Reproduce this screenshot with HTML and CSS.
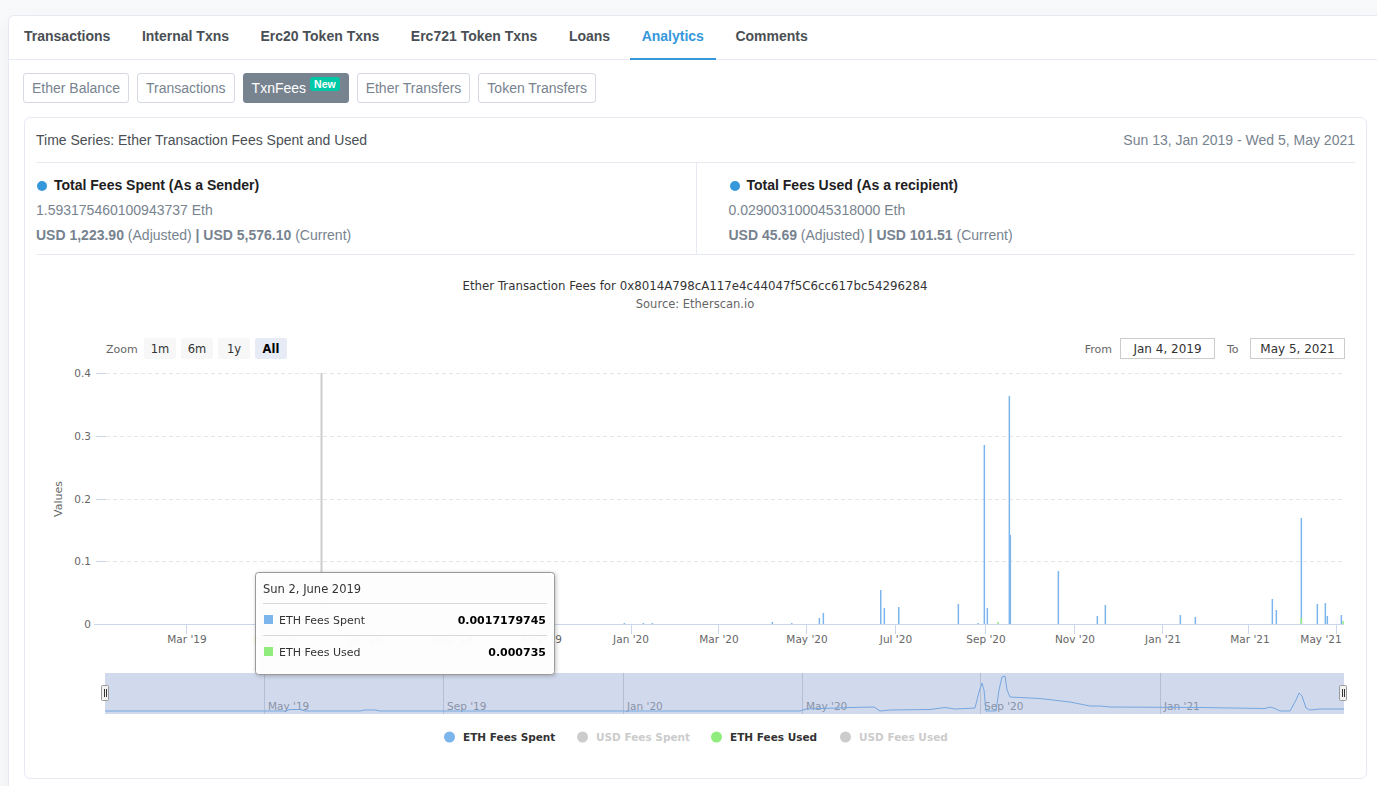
FILE: index.html
```html
<!DOCTYPE html>
<html lang="en">
<head>
  <meta charset="UTF-8">
  <meta name="viewport" content="width=device-width, initial-scale=1.0">
  <title>Analytics - TxnFees</title>
  <link rel="stylesheet" href="styles.css">
</head>
<body>
  <div class="card">
    <!-- Main tabs -->
    <ul class="nav-tabs">
      <li><a href="#">Transactions</a></li>
      <li><a href="#">Internal Txns</a></li>
      <li><a href="#">Erc20 Token Txns</a></li>
      <li><a href="#">Erc721 Token Txns</a></li>
      <li><a href="#">Loans</a></li>
      <li><a href="#" class="active">Analytics</a></li>
      <li><a href="#">Comments</a></li>
    </ul>

    <div class="tab-body">
      <div class="chart-tabs">
        <button class="btn">Ether Balance</button>
        <button class="btn">Transactions</button>
        <button class="btn active">TxnFees<span class="badge-new">New</span></button>
        <button class="btn">Ether Transfers</button>
        <button class="btn">Token Transfers</button>
      </div>

      <div class="panel">
        <div class="panel-header">
          <span>Time Series: Ether Transaction Fees Spent and Used</span>
          <span class="range">Sun 13, Jan 2019 - Wed 5, May 2021</span>
        </div>

        <div class="stats">
          <div class="stat">
            <div class="stat-title"><span class="dot"></span>Total Fees Spent (As a Sender)</div>
            <div class="stat-value">1.593175460100943737 Eth</div>
            <div class="stat-usd"><b>USD 1,223.90</b> (Adjusted) <b>| USD 5,576.10</b> (Current)</div>
          </div>
          <div class="stat">
            <div class="stat-title"><span class="dot"></span>Total Fees Used (As a recipient)</div>
            <div class="stat-value">0.029003100045318000 Eth</div>
            <div class="stat-usd"><b>USD 45.69</b> (Adjusted) <b>| USD 101.51</b> (Current)</div>
          </div>
        </div>

        <!-- Highcharts-like stock chart, drawn in page coordinates -->
        <div class="chart">
          <svg class="hc" viewBox="36 255 1318 510" width="1318" height="510">
            <text class="hc-title" x="695" y="290" text-anchor="middle">Ether Transaction Fees for 0x8014A798cA117e4c44047f5C6cc617bc54296284</text>
            <text class="hc-subtitle" x="695" y="308" text-anchor="middle">Source: Etherscan.io</text>

            <!-- range selector -->
            <text class="rs-label" x="106" y="352.5">Zoom</text>
            <g class="rs-btn">
              <rect x="144" y="338" width="32" height="21" rx="2"/>
              <text x="160" y="352.5" text-anchor="middle">1m</text>
            </g>
            <g class="rs-btn">
              <rect x="181" y="338" width="32" height="21" rx="2"/>
              <text x="197" y="352.5" text-anchor="middle">6m</text>
            </g>
            <g class="rs-btn">
              <rect x="218" y="338" width="32" height="21" rx="2"/>
              <text x="234" y="352.5" text-anchor="middle">1y</text>
            </g>
            <g class="rs-btn active">
              <rect x="255" y="338" width="32" height="21" rx="2"/>
              <text x="271" y="352.5" text-anchor="middle">All</text>
            </g>

            <text class="rs-label" x="1112" y="352.5" text-anchor="end">From</text>
            <rect class="rs-input" x="1120.5" y="338.5" width="94" height="20"/>
            <text class="rs-input-text" x="1167.5" y="353" text-anchor="middle">Jan 4, 2019</text>
            <text class="rs-label" x="1227" y="352.5">To</text>
            <rect class="rs-input" x="1250.5" y="338.5" width="94" height="20"/>
            <text class="rs-input-text" x="1297.5" y="353" text-anchor="middle">May 5, 2021</text>

            <!-- grid -->
            <g class="grid">
              <line x1="106" y1="373.5" x2="1344" y2="373.5"/>
              <line x1="106" y1="436.5" x2="1344" y2="436.5"/>
              <line x1="106" y1="499.5" x2="1344" y2="499.5"/>
              <line x1="106" y1="561.5" x2="1344" y2="561.5"/>
            </g>
            <g class="axis">
              <line x1="96" y1="373.5" x2="106" y2="373.5"/>
              <line x1="96" y1="436.5" x2="106" y2="436.5"/>
              <line x1="96" y1="499.5" x2="106" y2="499.5"/>
              <line x1="96" y1="561.5" x2="106" y2="561.5"/>
              <line x1="94" y1="624.5" x2="1344" y2="624.5"/>
              <line x1="186.5" y1="624" x2="186.5" y2="634"/>
              <line x1="275.5" y1="624" x2="275.5" y2="634"/>
              <line x1="364.5" y1="624" x2="364.5" y2="634"/>
              <line x1="453.5" y1="624" x2="453.5" y2="634"/>
              <line x1="542.5" y1="624" x2="542.5" y2="634"/>
              <line x1="631.5" y1="624" x2="631.5" y2="634"/>
              <line x1="718.5" y1="624" x2="718.5" y2="634"/>
              <line x1="806.5" y1="624" x2="806.5" y2="634"/>
              <line x1="895.5" y1="624" x2="895.5" y2="634"/>
              <line x1="985.5" y1="624" x2="985.5" y2="634"/>
              <line x1="1074.5" y1="624" x2="1074.5" y2="634"/>
              <line x1="1162.5" y1="624" x2="1162.5" y2="634"/>
              <line x1="1248.5" y1="624" x2="1248.5" y2="634"/>
              <line x1="1336.5" y1="624" x2="1336.5" y2="634"/>
            </g>
            <g class="ylabels" text-anchor="end">
              <text x="91" y="377">0.4</text>
              <text x="91" y="440">0.3</text>
              <text x="91" y="503">0.2</text>
              <text x="91" y="565">0.1</text>
              <text x="91" y="628">0</text>
            </g>
            <text class="ytitle" x="62" y="499" text-anchor="middle" transform="rotate(-90 62 499)">Values</text>
            <g class="xlabels" text-anchor="middle">
              <text x="187" y="643">Mar '19</text>
              <text x="275" y="643">May '19</text>
              <text x="365" y="643">Jul '19</text>
              <text x="453" y="643">Sep '19</text>
              <text x="542" y="643">Nov '19</text>
              <text x="631" y="643">Jan '20</text>
              <text x="719" y="643">Mar '20</text>
              <text x="807" y="643">May '20</text>
              <text x="896" y="643">Jul '20</text>
              <text x="986" y="643">Sep '20</text>
              <text x="1075" y="643">Nov '20</text>
              <text x="1163" y="643">Jan '21</text>
              <text x="1250" y="643">Mar '21</text>
              <text x="1321" y="643">May '21</text>
            </g>

            <line class="crosshair" x1="321.5" y1="373" x2="321.5" y2="624"/>

            <!-- ETH Fees Spent -->
            <g class="bars-spent">
              <rect x="623.6" y="623" width="1.5" height="1"/>
              <rect x="642.6" y="623" width="1.5" height="1"/>
              <rect x="651.6" y="623" width="1.5" height="1"/>
              <rect x="771.6" y="622" width="1.5" height="2"/>
              <rect x="791" y="623" width="1.5" height="1"/>
              <rect x="818.6" y="618" width="1.5" height="6"/>
              <rect x="822.6" y="613" width="1.5" height="11"/>
              <rect x="880" y="590" width="1.5" height="34"/>
              <rect x="883.6" y="608" width="1.5" height="16"/>
              <rect x="898" y="607" width="1.5" height="17"/>
              <rect x="957.6" y="604" width="1.5" height="20"/>
              <rect x="977.3" y="623" width="1.5" height="1"/>
              <rect x="983.6" y="445" width="1.5" height="179"/>
              <rect x="986.6" y="608" width="1.5" height="16"/>
              <rect x="1008.6" y="396" width="1.5" height="228"/>
              <rect x="1009.6" y="535" width="1.5" height="89"/>
              <rect x="1057.6" y="571" width="1.5" height="53"/>
              <rect x="1096.6" y="616" width="1.5" height="8"/>
              <rect x="1104.6" y="605" width="1.5" height="19"/>
              <rect x="1179.6" y="615" width="1.5" height="9"/>
              <rect x="1194.6" y="617" width="1.5" height="7"/>
              <rect x="1271.6" y="599" width="1.5" height="25"/>
              <rect x="1275.6" y="610" width="1.5" height="14"/>
              <rect x="1300.6" y="518" width="1.5" height="106"/>
              <rect x="1316.6" y="604" width="1.5" height="20"/>
              <rect x="1324.6" y="603" width="1.5" height="21"/>
              <rect x="1326.6" y="616" width="1.5" height="8"/>
              <rect x="1340.6" y="615" width="1.5" height="9"/>
            </g>
            <!-- ETH Fees Used -->
            <g class="bars-used">
              <rect x="997.3" y="622" width="1.5" height="2"/>
              <rect x="1300.6" y="618" width="1.5" height="6"/>
              <rect x="1342.3" y="621" width="1.5" height="3"/>
            </g>

            <!-- navigator -->
            <g class="nav-grid">
              <line x1="264.5" y1="673" x2="264.5" y2="714"/>
              <line x1="443.5" y1="673" x2="443.5" y2="714"/>
              <line x1="623.5" y1="673" x2="623.5" y2="714"/>
              <line x1="802.5" y1="673" x2="802.5" y2="714"/>
              <line x1="980.5" y1="673" x2="980.5" y2="714"/>
              <line x1="1160.5" y1="673" x2="1160.5" y2="714"/>
            </g>
            <g class="nav-labels">
              <text x="268" y="710">May '19</text>
              <text x="447" y="710">Sep '19</text>
              <text x="627" y="710">Jan '20</text>
              <text x="806" y="710">May '20</text>
              <text x="984" y="710">Sep '20</text>
              <text x="1164" y="710">Jan '21</text>
            </g>
            <path class="nav-series" d="M105,711 L285,711 L290,709.5 L300,709.5 L305,711 L360,711 L365,710 L375,710 L380,711 L800,711 L806,709 L850,707.5 L874,707 L880,711 L890,710 L930,709.5 L945,707.5 L955,709 L975,708 L979,692 L982,683 L984,690 L986,711 L996,711 L999,690 L1002,677 L1005,676 L1007,690 L1010,697 L1040,698.5 L1070,702 L1090,706 L1100,706 L1110,707 L1200,707.5 L1265,708.5 L1270,707 L1275,708.5 L1280,711 L1290,711 L1296,700 L1299,693 L1302,696 L1306,708 L1310,710 L1320,709 L1344,709"/>
            <rect class="nav-mask" x="105" y="673" width="1239" height="41"/>
            <g class="nav-handle">
              <rect x="101.5" y="685.5" width="7" height="15" rx="1"/>
              <line x1="104.5" y1="689" x2="104.5" y2="697"/>
              <line x1="106.5" y1="689" x2="106.5" y2="697"/>
            </g>
            <g class="nav-handle">
              <rect x="1339.5" y="685.5" width="7" height="15" rx="1"/>
              <line x1="1342.5" y1="689" x2="1342.5" y2="697"/>
              <line x1="1344.5" y1="689" x2="1344.5" y2="697"/>
            </g>

            <!-- legend -->
            <g class="legend">
              <circle cx="449.5" cy="737" r="5.5" fill="#7cb5ec"/>
              <text x="463" y="741">ETH Fees Spent</text>
              <circle cx="582.5" cy="737" r="5.5" fill="#cccccc"/>
              <text class="off" x="596" y="741">USD Fees Spent</text>
              <circle cx="716.5" cy="737" r="5.5" fill="#90ed7d"/>
              <text x="730" y="741">ETH Fees Used</text>
              <circle cx="845.5" cy="737" r="5.5" fill="#cccccc"/>
              <text class="off" x="859" y="741">USD Fees Used</text>
            </g>

            <!-- tooltip -->
            <g class="tooltip">
              <rect class="tip-box" x="255.5" y="572.5" width="299" height="102" rx="3"/>
              <text class="tip-head" x="263" y="592.5">Sun 2, June 2019</text>
              <line class="tip-sep" x1="263" y1="603.5" x2="547" y2="603.5"/>
              <rect x="264" y="615" width="9" height="9" fill="#7cb5ec"/>
              <text class="tip-name" x="279" y="624">ETH Fees Spent</text>
              <text class="tip-val" x="546" y="624" text-anchor="end">0.0017179745</text>
              <line class="tip-sep" x1="263" y1="635.5" x2="547" y2="635.5"/>
              <rect x="264" y="647" width="9" height="9" fill="#90ed7d"/>
              <text class="tip-name" x="279" y="656">ETH Fees Used</text>
              <text class="tip-val" x="546" y="656" text-anchor="end">0.000735</text>
            </g>
          </svg>
        </div>
      </div>
    </div>
  </div>
</body>
</html>
```

FILE: styles.css
```css
html, body {
  margin: 0;
  overflow: hidden;
}

body {
  background-color: #f8f9fa;
  font-family: "Liberation Sans", Arial, sans-serif;
  font-size: 14px;
  color: #4a4f55;
  padding: 15px 0 0 8px;
}

.card {
  width: 1374px;
  background: #fff;
  border: 1px solid #e7eaf3;
  border-radius: 6px;
  box-shadow: 0 8px 20px rgba(189, 197, 209, 0.2);
}

/* Main tabs */
.nav-tabs {
  display: flex;
  gap: 7.5px;
  list-style: none;
  margin: 0;
  padding: 0 0 0 3px;
  border-bottom: 1px solid #e7eaf3;
}
.nav-tabs a {
  display: block;
  padding: 10px 12px 12px;
  line-height: 20px;
  font-weight: bold;
  color: #4a4f55;
  text-decoration: none;
  border-bottom: 2px solid transparent;
  margin-bottom: -1px;
}
.nav-tabs a.active {
  color: #3498db;
  border-bottom-color: #3498db;
}

.tab-body {
  padding: 13px 16px 40px 14px;
}

/* Chart switch buttons */
.chart-tabs {
  display: flex;
  gap: 8px;
}
.btn {
  font-family: inherit;
  font-size: 14px;
  line-height: 20px;
  padding: 4px 8px;
  border: 1px solid #d5dae2;
  border-radius: 3px;
  background: #fff;
  color: #77838f;
  cursor: pointer;
}
.btn.active {
  background: #77838f;
  border-color: #77838f;
  color: #fff;
}
.badge-new {
  display: inline-block;
  vertical-align: top;
  position: relative;
  top: -1px;
  margin-left: 4px;
  padding: 1px 4px;
  line-height: 12px;
  font-size: 10.5px;
  font-weight: bold;
  background: #00c9a7;
  color: #fff;
  border-radius: 3px;
}

/* Panel */
.panel {
  margin: 14px 0 0 1px;
  border: 1px solid #e7eaf3;
  border-radius: 6px;
  padding: 0 11px 13px;
}
.panel-header {
  display: flex;
  justify-content: space-between;
  padding: 12px 0;
  line-height: 20px;
  border-bottom: 1px solid #e7eaf3;
  color: #4a4f55;
}
.panel-header .range {
  color: #77838f;
}

.stats {
  display: grid;
  grid-template-columns: 1fr 1fr;
  border-bottom: 1px solid #e7eaf3;
}
.stat {
  padding: 10px 0 6px;
  line-height: 25px;
  color: #77838f;
}
.stat + .stat {
  border-left: 1px solid #e7eaf3;
  padding-left: 32px;
}
.stat-title {
  font-weight: bold;
  color: #1e2022;
}
.dot {
  display: inline-block;
  width: 10px;
  height: 10px;
  border-radius: 50%;
  background: #3498db;
  margin: 0 7px 0 1px;
  vertical-align: -1px;
}

/* Chart */
.chart svg {
  display: block;
}
.hc text {
  font-family: "DejaVu Sans", Verdana, sans-serif;
}
.hc-title { font-size: 11.8px; fill: #333; }
.hc-subtitle { font-size: 11.5px; fill: #666; }

.rs-label { font-size: 11px; fill: #666; }
.rs-btn rect { fill: #f7f7f7; }
.rs-btn text { font-size: 11.5px; fill: #333; }
.rs-btn.active rect { fill: #e6ebf5; }
.rs-btn.active text { font-weight: bold; fill: #000; }
.rs-input { fill: #fff; stroke: #cccccc; }
.rs-input-text { font-size: 12px; fill: #333; }

.grid line {
  stroke: #e6e6e6;
  stroke-dasharray: 4 3;
}
.axis line { stroke: #ccd6eb; }
.ylabels text, .xlabels text { font-size: 10.5px; fill: #666; }
.ytitle { font-size: 11px; fill: #666; }

.crosshair { stroke: #cccccc; stroke-width: 2; }
.bars-spent rect { fill: #7cb5ec; }
.bars-used rect { fill: #90ed7d; }

.nav-grid line { stroke: #d8d8d8; }
.nav-labels text { font-size: 10.5px; fill: #999; }
.nav-series { fill: none; stroke: #7cb5ec; stroke-width: 1; }
.nav-mask { fill: rgba(102, 133, 194, 0.3); }
.nav-handle rect { fill: #f2f2f2; stroke: #999; }
.nav-handle line { stroke: #333; }

.legend text { font-size: 10.5px; font-weight: bold; fill: #333; }
.legend text.off { fill: #cccccc; }

.tooltip { filter: drop-shadow(1px 1px 2px rgba(0, 0, 0, 0.25)); }
.tip-box { fill: rgba(255, 255, 255, 0.97); stroke: #999; }
.tip-head { font-size: 11.5px; fill: #333; }
.tip-sep { stroke: #d8d8d8; }
.tip-name { font-size: 11px; fill: #333; }
.tip-val { font-size: 11px; font-weight: bold; fill: #000; }
```
